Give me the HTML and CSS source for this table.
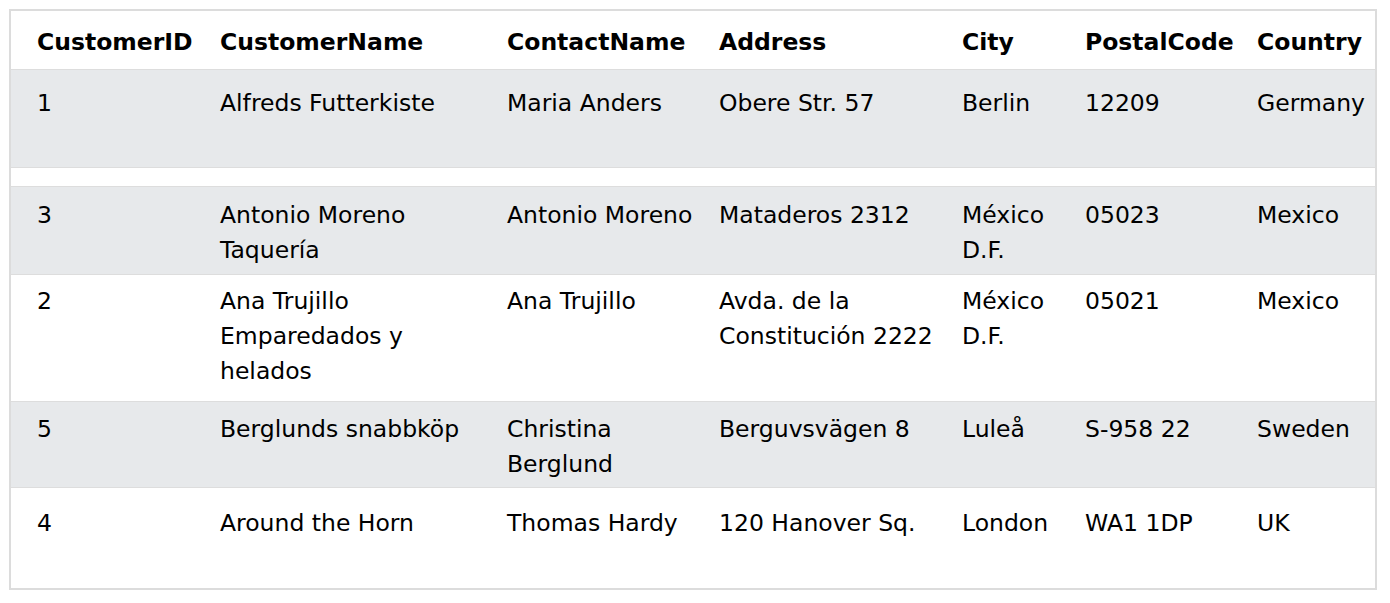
FILE: index.html
```html
<!DOCTYPE html>
<html>
<head>
<meta charset="utf-8">
<title>Customers</title>
<link rel="stylesheet" href="styles.css">
</head>
<body>
<div class="wrap">
<table class="customers">
  <colgroup>
    <col class="c1"><col class="c2"><col class="c3"><col class="c4"><col class="c5"><col class="c6"><col class="c7">
  </colgroup>
  <tr class="head">
    <th>CustomerID</th><th>CustomerName</th><th>ContactName</th><th>Address</th><th>City</th><th>PostalCode</th><th>Country</th>
  </tr>
  <tr class="r1 alt">
    <td>1</td><td>Alfreds Futterkiste</td><td>Maria Anders</td><td>Obere Str. 57</td><td>Berlin</td><td>12209</td><td>Germany</td>
  </tr>
  <tr class="gap">
    <td></td><td></td><td></td><td></td><td></td><td></td><td></td>
  </tr>
  <tr class="r3 alt">
    <td>3</td><td>Antonio Moreno Taquería</td><td>Antonio Moreno</td><td>Mataderos 2312</td><td>México D.F.</td><td>05023</td><td>Mexico</td>
  </tr>
  <tr class="r2">
    <td>2</td><td>Ana Trujillo Emparedados y helados</td><td>Ana Trujillo</td><td>Avda. de la Constitución 2222</td><td>México D.F.</td><td>05021</td><td>Mexico</td>
  </tr>
  <tr class="r5 alt">
    <td>5</td><td>Berglunds snabbköp</td><td>Christina Berglund</td><td>Berguvsvägen 8</td><td>Luleå</td><td>S-958 22</td><td>Sweden</td>
  </tr>
  <tr class="r4">
    <td>4</td><td>Around the Horn</td><td>Thomas Hardy</td><td>120 Hanover Sq.</td><td>London</td><td>WA1 1DP</td><td>UK</td>
  </tr>
</table>
</div>
</body>
</html>
```

FILE: styles.css
```css
html, body {
  margin: 0;
  padding: 0;
  background: #ffffff;
}

.wrap {
  padding: 9px 0 0 9px;
}

.customers {
  width: 1368px;
  table-layout: fixed;
  border-collapse: separate;
  border-spacing: 0;
  border: 2px solid #dcdcdc;
  font-family: "DejaVu Sans", Verdana, sans-serif;
  font-size: 23.5px;
  line-height: 35px;
  color: #000000;
}

.c1 { width: 197px; }
.c2 { width: 287px; }
.c3 { width: 212px; }
.c4 { width: 243px; }
.c5 { width: 123px; }
.c6 { width: 172px; }
.c7 { width: 130px; }

.customers th,
.customers td {
  text-align: left;
  vertical-align: top;
  padding: 0 2px 0 12px;
  border-bottom: 1px solid #dddddd;
  white-space: normal;
}

.customers th:first-child,
.customers td:first-child {
  padding-left: 26px;
}

.customers th {
  font-weight: bold;
  white-space: nowrap;
}

.alt td {
  background: #e7e9eb;
}

.head { height: 59px; }
.head th { padding-top: 14px; }

.r1 { height: 98px; }
.r1 td { padding-top: 16px; }

.gap { height: 19px; }

.r3 { height: 88px; }
.r3 td { padding-top: 11px; }

.r2 { height: 127px; }
.r2 td { padding-top: 9px; }

.r5 { height: 86px; }
.r5 td { padding-top: 10px; }

.r4 { height: 100px; }
.r4 td { padding-top: 18px; border-bottom: none; }
```
